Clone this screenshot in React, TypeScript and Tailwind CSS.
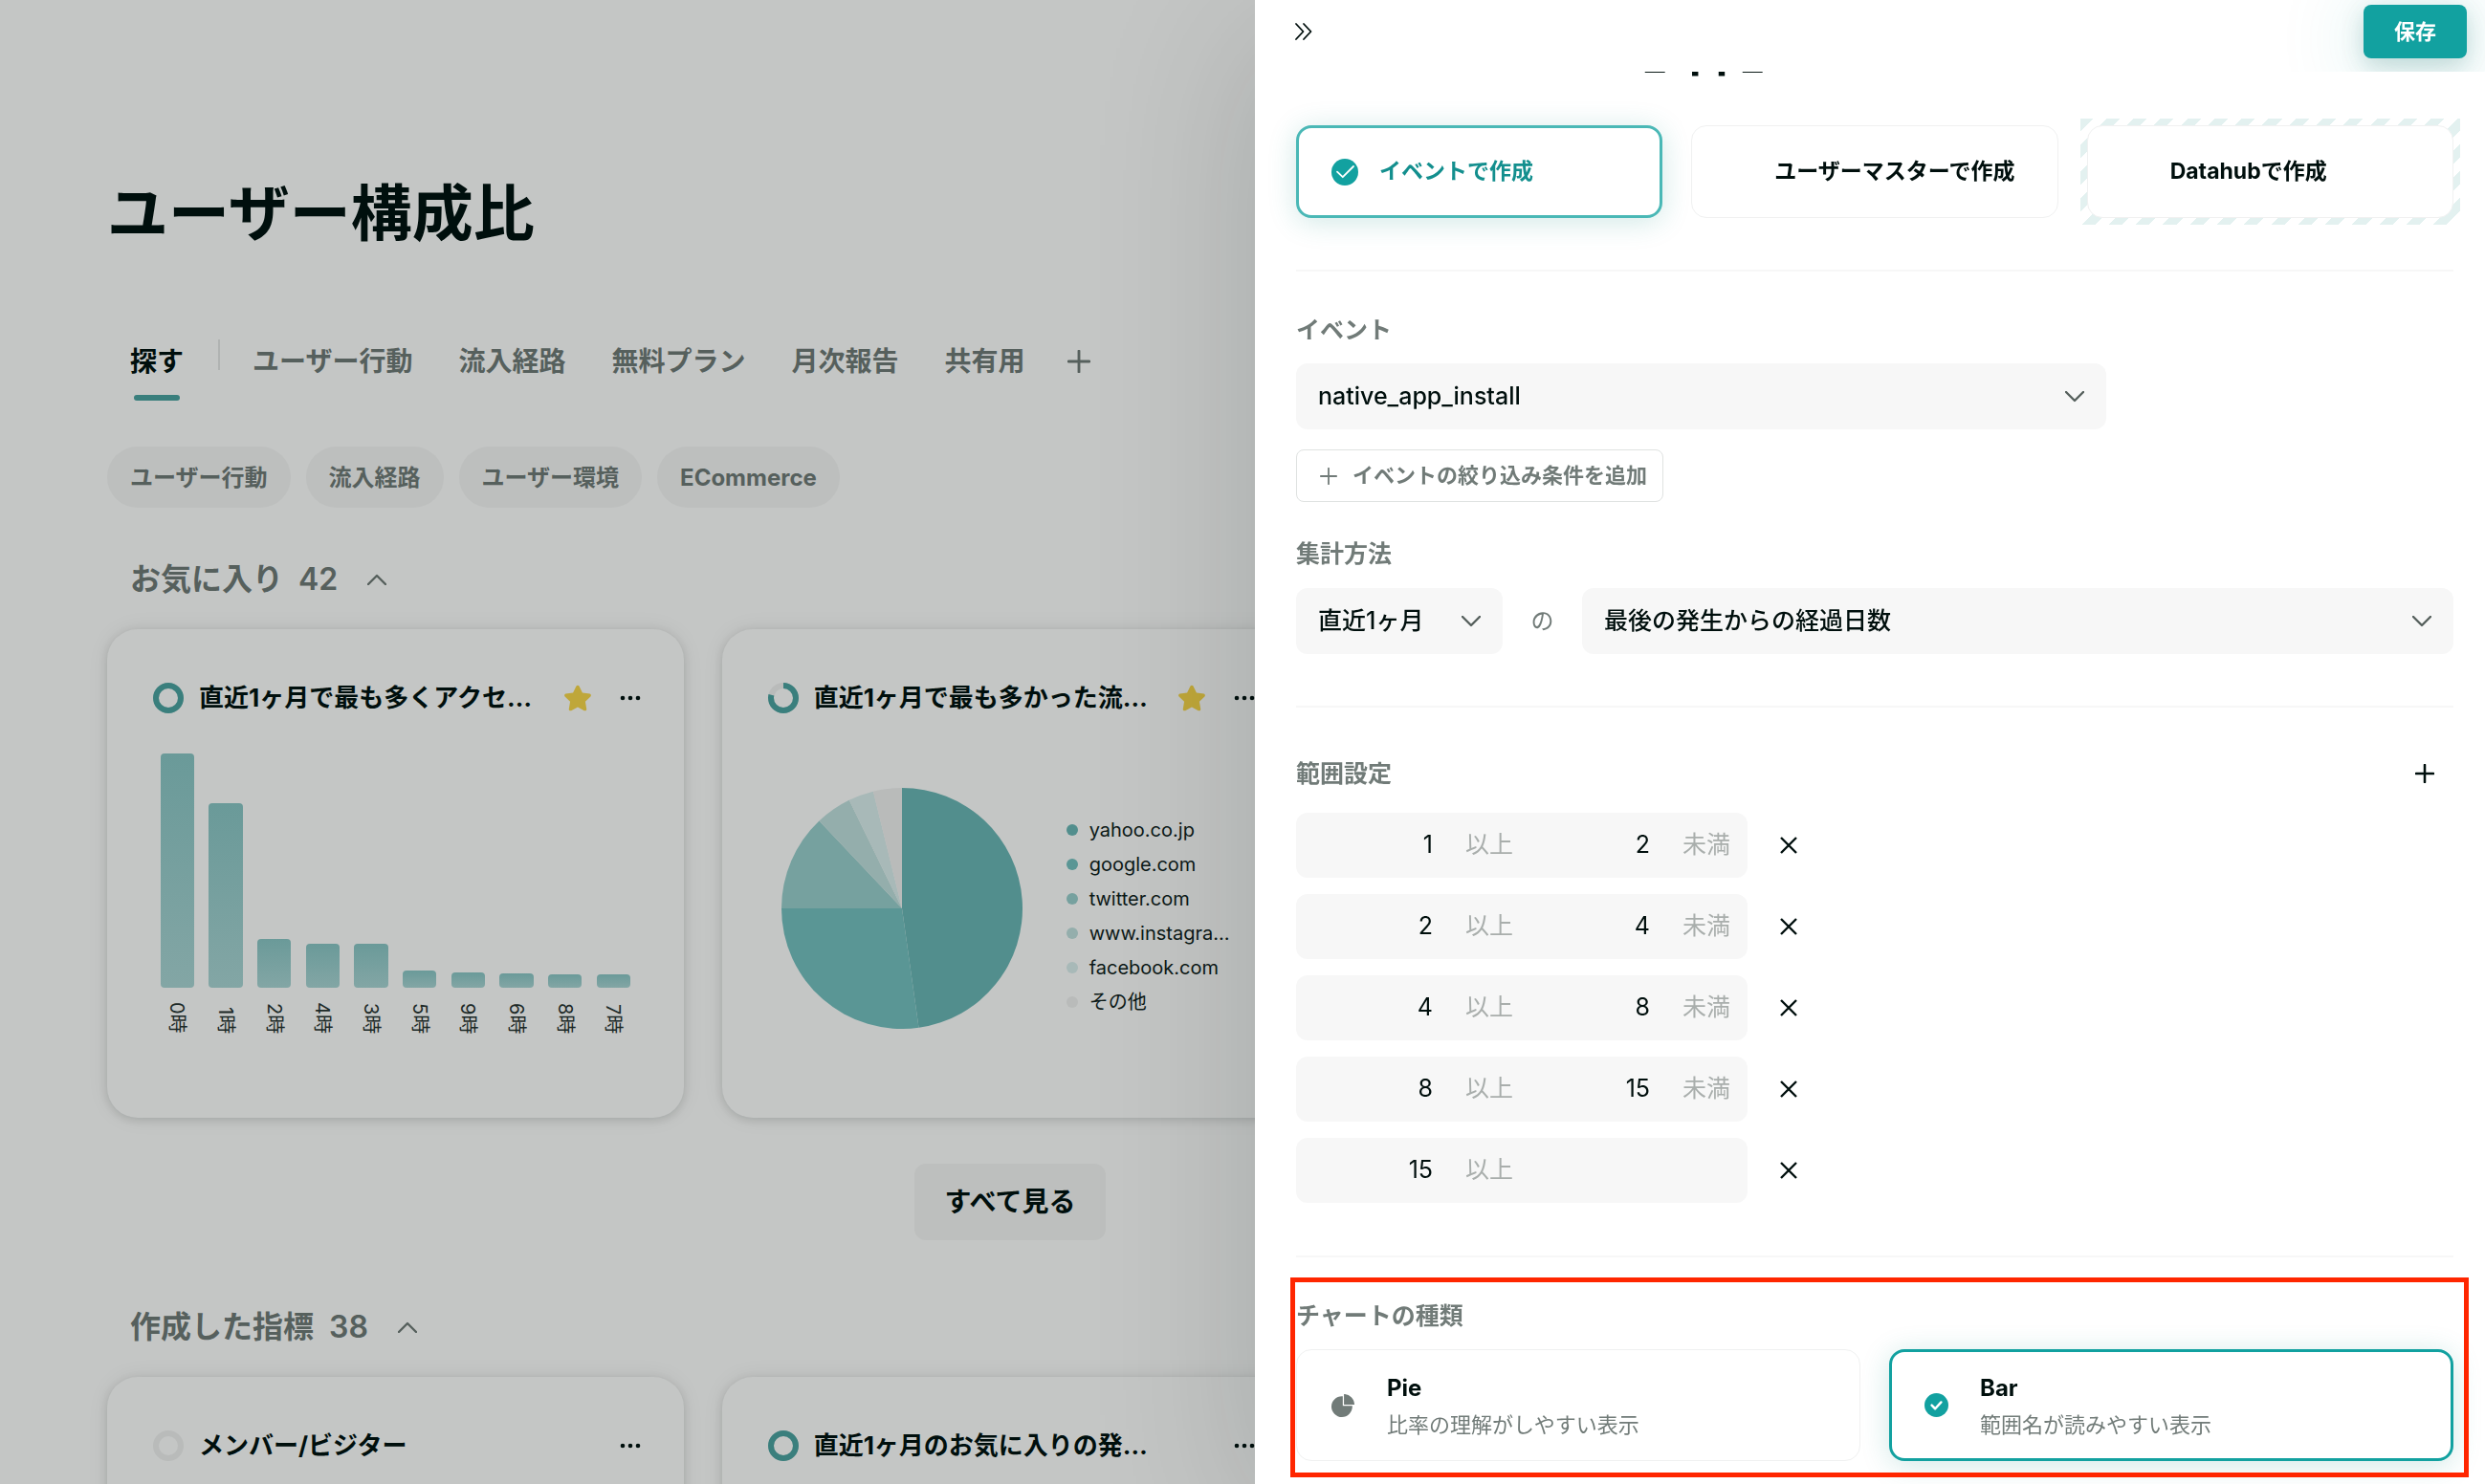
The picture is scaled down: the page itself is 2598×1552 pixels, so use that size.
import { useState } from "react";
import type { ReactNode } from "react";
import clsx from "clsx";
import { AiFillPieChart } from "react-icons/ai";
import { FaStar } from "react-icons/fa";

type Slice = { label: string; from: number; to: number; color: string };
type Range = { id: number; min: string; max?: string };

const TABS = ["ユーザー行動", "流入経路", "無料プラン", "月次報告", "共有用"];
const CHIPS = ["ユーザー行動", "流入経路", "ユーザー環境", "ECommerce"];

const HOURS = [
  { label: "0時", height: 245 },
  { label: "1時", height: 193 },
  { label: "2時", height: 51 },
  { label: "4時", height: 46 },
  { label: "3時", height: 46 },
  { label: "5時", height: 18 },
  { label: "9時", height: 16 },
  { label: "6時", height: 15 },
  { label: "8時", height: 14 },
  { label: "7時", height: 14 },
];

// angles in degrees, clockwise from the top
const SLICES: Slice[] = [
  { label: "yahoo.co.jp", from: 0, to: 172, color: "#528e8d" },
  { label: "google.com", from: 172, to: 270, color: "#5a9695" },
  { label: "twitter.com", from: 270, to: 316.6, color: "#76a19f" },
  { label: "www.instagra…", from: 316.6, to: 334, color: "#94aeac" },
  { label: "facebook.com", from: 334, to: 346.2, color: "#a8b9b8" },
  { label: "その他", from: 346.2, to: 360, color: "#b9bbba" },
];

const RANGES: Range[] = [
  { id: 1, min: "1", max: "2" },
  { id: 2, min: "2", max: "4" },
  { id: 3, min: "4", max: "8" },
  { id: 4, min: "8", max: "15" },
  { id: 5, min: "15" },
];

function Chevron({ up }: { up?: boolean }) {
  return (
    <svg viewBox="0 0 20 12" className="h-3 w-5" fill="none" stroke="currentColor" strokeWidth="2.4">
      <path d={up ? "M1 11 10 2l9 9" : "M1 1l9 9 9-9"} strokeLinecap="round" strokeLinejoin="round" />
    </svg>
  );
}

function Plus({ className }: { className: string }) {
  return (
    <svg viewBox="0 0 22 22" className={className} fill="none" stroke="currentColor" strokeLinecap="round">
      <path d="M11 1v20M1 11h20" />
    </svg>
  );
}

function CheckCircle({ className, thick }: { className: string; thick?: boolean }) {
  return (
    <svg viewBox="0 0 28 28" className={className} fill="none">
      <circle cx="14" cy="14" r="14" fill="#12a1a0" />
      <path
        d={thick ? "M8.5 14.2l4 4 7-7.6" : "M6 13.6l5.8 5.6L23 8"}
        stroke="#fff"
        strokeWidth={thick ? 2.8 : 1.8}
        strokeLinecap="round"
        strokeLinejoin="round"
      />
    </svg>
  );
}

function Ring({ percent }: { percent: number }) {
  return (
    <svg viewBox="0 0 32 32" className="size-8 shrink-0 -rotate-90" fill="none" strokeWidth="6">
      <circle cx="16" cy="16" r="13" stroke="#b9bbba" />
      <circle cx="16" cy="16" r="13" stroke="#3a7f7d" pathLength="100" strokeDasharray={`${percent} 100`} />
    </svg>
  );
}

function BarChart() {
  return (
    <div className="mt-[34px] flex">
      {HOURS.map((hour) => (
        <div key={hour.label} className="flex flex-1 flex-col items-center">
          <div className="flex h-[245px] w-[70%] items-end">
            <div
              className="w-full rounded-sm bg-linear-to-b from-[#6a9a99] to-[#83a6a5]"
              style={{ height: hour.height }}
            />
          </div>
          <span className="mt-[15px] h-[33px] text-right text-xl leading-6 whitespace-nowrap text-[#1c2927] [text-orientation:sideways] [writing-mode:vertical-rl]">
            {hour.label}
          </span>
        </div>
      ))}
    </div>
  );
}

function slicePath({ from, to }: Slice) {
  const point = (deg: number) => {
    const rad = (deg * Math.PI) / 180;
    return `${126 + 126 * Math.sin(rad)} ${126 - 126 * Math.cos(rad)}`;
  };
  return `M126 126L${point(from)}A126 126 0 0 1 ${point(to)}Z`;
}

function PieChart() {
  return (
    <div className="mt-[70px] flex items-start gap-[46px] pl-[14px]">
      <svg viewBox="0 0 252 252" className="size-[252px] shrink-0">
        {SLICES.map((slice) => (
          <path key={slice.label} d={slicePath(slice)} fill={slice.color} />
        ))}
      </svg>
      <ul className="flex flex-col gap-4 pt-[34px]">
        {SLICES.map((slice) => (
          <li key={slice.label} className="flex items-center gap-3 text-xl leading-5 text-[#0c1917]">
            <span className="size-3 rounded-full" style={{ backgroundColor: slice.color }} />
            {slice.label}
          </li>
        ))}
      </ul>
    </div>
  );
}

function MetricCard({
  title,
  percent,
  starred,
  children,
}: {
  title: string;
  percent: number;
  starred?: boolean;
  children?: ReactNode;
}) {
  return (
    <article className="h-[511px] rounded-[32px] bg-[#c4c6c5] px-12 pt-12 shadow-[0_2px_8px_rgba(0,20,16,0.14),0_0_24px_rgba(0,20,16,0.06)]">
      <header className="flex h-12 items-center">
        <Ring percent={percent} />
        <h3 className="ml-4 flex-1 text-[26px] leading-10 font-bold whitespace-nowrap">{title}</h3>
        {starred ? (
          <button type="button" aria-label="star" className="mr-7 text-[#bfa73a]">
            <FaStar className="size-[30px]" />
          </button>
        ) : null}
        <button type="button" aria-label="menu" className="-mr-1">
          <svg viewBox="0 0 24 24" className="size-6" fill="currentColor">
            <circle cx="4" cy="12" r="2.3" />
            <circle cx="12" cy="12" r="2.3" />
            <circle cx="20" cy="12" r="2.3" />
          </svg>
        </button>
      </header>
      {children}
    </article>
  );
}

function SectionHeading({ title, count }: { title: string; count: number }) {
  return (
    <h2 className="ml-6 h-12 text-[32px] leading-[48px] font-bold text-[#56605d]">
      <button type="button" className="flex items-center gap-4">
        <span>{title}</span>
        <span className="font-semibold">{count}</span>
        <span className="ml-[15px]">
          <Chevron up />
        </span>
      </button>
    </h2>
  );
}

function Dashboard() {
  return (
    <main className="max-w-[2000px] pt-[183px] pl-28">
      <h1 className="text-[64px] leading-[80px] font-bold">ユーザー構成比</h1>

      <nav className="mt-[92px] flex h-16 items-start gap-12 text-[28px] leading-[46px] font-bold text-[#56605d]">
        <div className="-mr-3.5 flex gap-9 pl-6">
          <button type="button" className="flex flex-col items-center gap-3 text-[#000f0d]">
            探す
            <span className="h-1.5 w-12 rounded-sm bg-[#3a7f7d]" />
          </button>
          <span className="h-8 w-0.5 bg-[#b0b3b2]" />
        </div>
        {TABS.map((tab) => (
          <button key={tab} type="button">
            {tab}
          </button>
        ))}
        <button type="button" aria-label="add tab" className="-ml-1 flex h-[46px] items-center">
          <Plus className="size-6 stroke-[2.6]" />
        </button>
      </nav>

      <div className="mt-12 flex gap-4">
        {CHIPS.map((chip) => (
          <button
            key={chip}
            type="button"
            className="h-16 rounded-full bg-[#bdbfbe] px-6 pt-0.5 text-2xl font-bold text-[#56605d]"
          >
            {chip}
          </button>
        ))}
      </div>

      <section className="mt-[51px]">
        <SectionHeading title="お気に入り" count={42} />
        <div className="mt-7 grid grid-cols-3 gap-10">
          <MetricCard title="直近1ヶ月で最も多くアクセ…" percent={100} starred>
            <BarChart />
          </MetricCard>
          <MetricCard title="直近1ヶ月で最も多かった流…" percent={79} starred>
            <PieChart />
          </MetricCard>
        </div>
        <div className="mt-12 flex justify-center">
          <button type="button" className="h-20 w-[200px] rounded-xl bg-[#bdbfbe] text-[28px] font-bold">
            すべて見る
          </button>
        </div>
      </section>

      <section className="mt-[67px]">
        <SectionHeading title="作成した指標" count={38} />
        <div className="mt-7 grid grid-cols-3 gap-10">
          <MetricCard title="メンバー/ビジター" percent={0} />
          <MetricCard title="直近1ヶ月のお気に入りの発…" percent={100} />
        </div>
      </section>
    </main>
  );
}

function SourceOption({
  label,
  checked,
  onSelect,
}: {
  label: string;
  checked: boolean;
  onSelect: () => void;
}) {
  return (
    <label
      className={clsx(
        "flex h-[97px] items-center rounded-2xl bg-white text-[23px] font-bold whitespace-nowrap",
        checked
          ? "border-3 border-[#4ab8b6] pl-[34px] text-[#138f8e] shadow-[0_4px_30px_rgba(18,140,130,0.2)]"
          : "border border-[#f0f1f1] pl-9",
      )}
    >
      <input type="radio" name="source" className="sr-only" checked={checked} onChange={onSelect} />
      <span className="mr-[22px] size-7">{checked ? <CheckCircle className="size-7" /> : null}</span>
      {label}
    </label>
  );
}

function SelectBox({ id, options, className }: { id: string; options: string[]; className: string }) {
  return (
    <div className={clsx("relative h-[69px] rounded-xl bg-[#f7f7f7]", className)}>
      <select
        id={id}
        className="h-full w-full appearance-none rounded-xl bg-transparent pr-16 pl-[23px] text-[25px] font-medium"
      >
        {options.map((option) => (
          <option key={option}>{option}</option>
        ))}
      </select>
      <span className="pointer-events-none absolute inset-y-0 right-[23px] flex items-center text-[#56605d]">
        <Chevron />
      </span>
    </div>
  );
}

function RangeRow({ range, onRemove }: { range: Range; onRemove: () => void }) {
  return (
    <li className="flex items-center gap-[35px]">
      <div className="flex h-[68px] w-[472px] items-center rounded-xl bg-[#f7f7f7] text-[25px] text-[#a9aeac]">
        <input
          aria-label="以上"
          defaultValue={range.min}
          className="mr-[34px] w-[143px] bg-transparent text-right text-[#000f0d]"
        />
        <span>以上</span>
        {range.max ? (
          <>
            <input
              aria-label="未満"
              defaultValue={range.max}
              className="mr-[34px] w-[143px] bg-transparent text-right text-[#000f0d]"
            />
            <span>未満</span>
          </>
        ) : null}
      </div>
      <button type="button" aria-label="remove" onClick={onRemove}>
        <svg viewBox="0 0 16 16" className="size-4 overflow-visible" stroke="currentColor" strokeWidth="2.4">
          <path d="M0 0l16 16M16 0L0 16" />
        </svg>
      </button>
    </li>
  );
}

function ChartOption({
  title,
  description,
  icon,
  checked,
  onSelect,
}: {
  title: string;
  description: string;
  icon: ReactNode;
  checked: boolean;
  onSelect: () => void;
}) {
  return (
    <label
      className={clsx(
        "flex h-[117px] items-center gap-8 rounded-2xl bg-white",
        checked
          ? "border-3 border-[#12a1a0] pl-8 shadow-[0_4px_30px_rgba(18,140,130,0.2)]"
          : "border border-[#f0f1f1] pl-[34px]",
      )}
    >
      <input type="radio" name="chart" className="sr-only" checked={checked} onChange={onSelect} />
      <span className="flex size-7 items-center justify-center text-[#717b78]">
        {checked ? <CheckCircle thick className="size-[25px]" /> : icon}
      </span>
      <span className="pt-0.5">
        <span className="block text-2xl leading-[38px] font-bold">{title}</span>
        <span className="block text-[22px] leading-[38px] text-[#717b78]">{description}</span>
      </span>
    </label>
  );
}

function FieldLabel({ htmlFor, children }: { htmlFor?: string; children: ReactNode }) {
  return (
    <label htmlFor={htmlFor} className="block text-[25px] leading-8 font-bold text-[#717b78]">
      {children}
    </label>
  );
}

function SettingsPanel() {
  const [source, setSource] = useState("イベントで作成");
  const [chart, setChart] = useState("Bar");
  const [ranges, setRanges] = useState(RANGES);

  return (
    <aside className="fixed inset-y-0 right-0 w-[49.5%] bg-white shadow-[0_40px_160px_rgba(0,20,16,0.16)]">
      <div className="relative z-10 flex h-[75px] items-start justify-between overflow-hidden bg-white pt-[5px] pr-[19px] pl-[41px]">
        <button type="button" aria-label="close" className="flex h-14 items-center">
          <svg viewBox="0 0 20 20" className="size-5" fill="none" stroke="currentColor" strokeWidth="1.8">
            <path d="M2 2l7.5 8L2 18M10 2l7.5 8L10 18" strokeLinecap="round" strokeLinejoin="round" />
          </svg>
        </button>
        <button
          type="button"
          className="h-14 w-[108px] rounded-lg bg-[#12a1a0] text-[22px] font-bold text-white shadow-[0_8px_24px_rgba(0,90,85,0.2),0_8px_90px_rgba(18,161,160,0.24)]"
        >
          保存
        </button>
      </div>

      <div className="pr-[33px] pl-[43px]">
        <h2 className="-mt-11 pl-[232px] text-[44px] leading-[48px] font-bold">native_app_install</h2>

        <div className="mt-[52px] grid grid-cols-3 gap-[30px]">
          <SourceOption
            label="イベントで作成"
            checked={source === "イベントで作成"}
            onSelect={() => setSource("イベントで作成")}
          />
          <SourceOption
            label="ユーザーマスターで作成"
            checked={source === "ユーザーマスターで作成"}
            onSelect={() => setSource("ユーザーマスターで作成")}
          />
          <div className="-m-[7px] bg-[repeating-linear-gradient(-45deg,#ffffff_0_10px,#e3f1f0_10px_20px)] p-[7px]">
            <SourceOption
              label="Datahubで作成"
              checked={source === "Datahubで作成"}
              onSelect={() => setSource("Datahubで作成")}
            />
          </div>
        </div>

        <hr className="mt-[54px] border-t-2 border-[#f7f7f7]" />

        <div className="mt-[45px]">
          <FieldLabel htmlFor="event">イベント</FieldLabel>
          <SelectBox id="event" options={["native_app_install"]} className="mt-[19px] w-[70%]" />
          <button
            type="button"
            className="mt-[21px] flex h-[55px] items-center gap-4 rounded-lg border border-[#dfe2e1] pr-4 pl-6 text-[22px] font-bold text-[#717b78]"
          >
            <Plus className="size-[18px] stroke-[2.2]" />
            イベントの絞り込み条件を追加
          </button>
        </div>

        <div className="mt-[38px]">
          <FieldLabel htmlFor="period">集計方法</FieldLabel>
          <div className="mt-5 flex items-center">
            <SelectBox id="period" options={["直近1ヶ月"]} className="w-[216px]" />
            <span className="w-[83px] text-center text-2xl text-[#717b78]">の</span>
            <SelectBox id="measure" options={["最後の発生からの経過日数"]} className="flex-1" />
          </div>
        </div>

        <hr className="mt-[54px] border-t-2 border-[#f7f7f7]" />

        <div className="mt-[53px]">
          <div className="flex items-center justify-between">
            <FieldLabel>範囲設定</FieldLabel>
            <button
              type="button"
              aria-label="add range"
              className="mr-5"
              onClick={() => setRanges([...ranges, { id: Date.now(), min: "" }])}
            >
              <Plus className="size-5 stroke-[2.8]" />
            </button>
          </div>
          <ul className="mt-[25px] flex flex-col gap-[17px]">
            {ranges.map((range) => (
              <RangeRow
                key={range.id}
                range={range}
                onRemove={() => setRanges(ranges.filter((r) => r.id !== range.id))}
              />
            ))}
          </ul>
        </div>

        <hr className="mt-[55px] border-t-2 border-[#f7f7f7]" />

        <div className="relative mt-[45px]">
          <FieldLabel>チャートの種類</FieldLabel>
          <div className="mt-[19px] grid grid-cols-2 gap-[30px]">
            <ChartOption
              title="Pie"
              description="比率の理解がしやすい表示"
              icon={<AiFillPieChart className="size-7" />}
              checked={chart === "Pie"}
              onSelect={() => setChart("Pie")}
            />
            <ChartOption
              title="Bar"
              description="範囲名が読みやすい表示"
              icon={<AiFillPieChart className="size-7" />}
              checked={chart === "Bar"}
              onSelect={() => setChart("Bar")}
            />
          </div>
          <div className="pointer-events-none absolute -top-6 -right-4 -bottom-[17px] -left-1.5 border-5 border-[#ff2600]" />
        </div>
      </div>
    </aside>
  );
}

export default function App() {
  return (
    <div className="h-screen overflow-hidden bg-[#c4c6c5] font-['Inter','Noto_Sans_CJK_JP',sans-serif] text-[#000f0d]">
      <Dashboard />
      <SettingsPanel />
    </div>
  );
}
